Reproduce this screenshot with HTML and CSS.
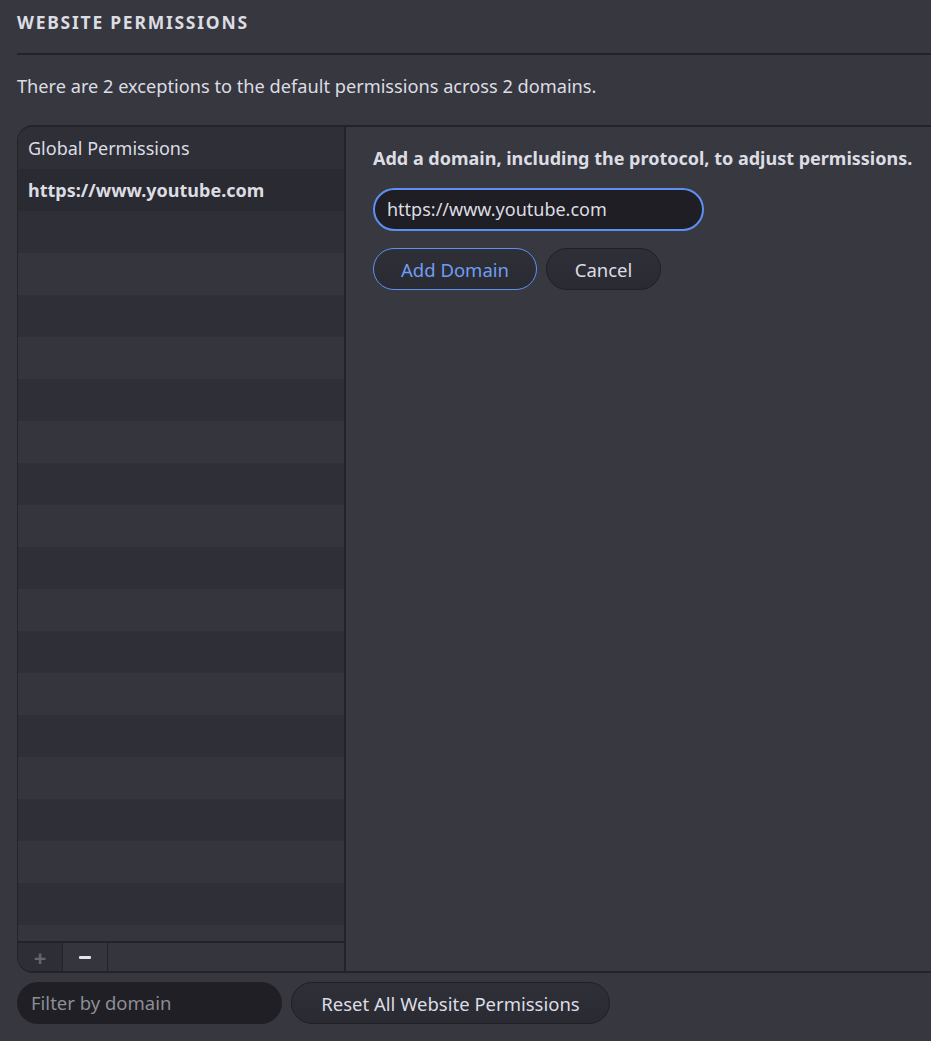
FILE: index.html
```html
<!DOCTYPE html>
<html>
<head>
<meta charset="utf-8">
<link rel="stylesheet" href="styles.css">
</head>
<body>
<div class="page">
  <h1 class="title">WEBSITE PERMISSIONS</h1>
  <div class="rule"></div>
  <p class="desc">There are 2 exceptions to the default permissions across 2 domains.</p>
  <div class="frame">
    <div class="list-col">
      <div class="list">
        <div class="row">Global Permissions</div>
        <div class="row sel">https://www.youtube.com</div>
        <div class="row"></div><div class="row"></div><div class="row"></div><div class="row"></div>
        <div class="row"></div><div class="row"></div><div class="row"></div><div class="row"></div>
        <div class="row"></div><div class="row"></div><div class="row"></div><div class="row"></div>
        <div class="row"></div><div class="row"></div><div class="row"></div><div class="row"></div>
        <div class="row"></div><div class="row"></div>
      </div>
      <div class="toolbar">
        <div class="tool plus">+</div>
        <div class="tool minus"><span class="dash"></span></div>
      </div>
    </div>
    <div class="pane">
      <div class="pane-head">Add a domain, including the protocol, to adjust permissions.</div>
      <div class="field">https://www.youtube.com</div>
      <div class="btns">
        <button class="btn primary">Add Domain</button>
        <button class="btn cancel">Cancel</button>
      </div>
    </div>
  </div>
  <div class="bottom">
    <div class="filter">Filter by domain</div>
    <button class="btn reset">Reset All Website Permissions</button>
  </div>
</div>
</body>
</html>
```
FILE: styles.css
```css
html, body {
  margin: 0;
  padding: 0;
  background: #373740;
  overflow: hidden;
}
body {
  font-family: "Noto Sans", "Open Sans", sans-serif;
  color: #dcdde3;
  font-size: 18px;
}
.page {
  padding-left: 17px;
  width: 960px;
}
.title {
  margin: 0;
  padding-top: 10px;
  height: 26px;
  font-size: 17.5px;
  font-weight: 700;
  letter-spacing: 1.75px;
  line-height: 24px;
  color: #dcdde3;
}
.rule {
  margin-top: 17px;
  height: 2px;
  background: #23232a;
}
.desc {
  margin: 0;
  padding-top: 19px;
  height: 51px;
  line-height: 24px;
  font-size: 18.2px;
}
.frame {
  display: flex;
  border-top: 2px solid #23232a;
  border-left: 1px solid #23232a;
  border-bottom: 2px solid #23232a;
  border-top-left-radius: 16px;
  border-bottom-left-radius: 16px;
  height: 844px;
  overflow: hidden;
}
.list-col {
  width: 326px;
  display: flex;
  flex-direction: column;
  background: #35353e;
  border-right: 2px solid #23232a;
}
.list {
  flex: 1;
  overflow: hidden;
}
.row {
  height: 42px;
  line-height: 42px;
  padding-left: 10px;
  background: #2f2f38;
  font-size: 18px;
}
.row:nth-child(even) {
  background: #35353e;
}
.row.sel {
  font-weight: 700;
  background: #2a2a32;
}
.toolbar {
  height: 28px;
  border-top: 2px solid #23232a;
  display: flex;
}
.tool {
  width: 44px;
  height: 28px;
  border-right: 1px solid #23232a;
  display: flex;
  align-items: center;
  justify-content: center;
}
.plus {
  background: #2e2e37;
  color: #64656e;
  font-size: 22px;
  font-weight: 700;
}
.dash {
  width: 12px;
  height: 3px;
  border-radius: 1px;
  background: #e4e5ea;
}
.pane {
  flex: 1;
  padding: 19px 27px;
  background: #383841;
}
.pane-head {
  font-weight: 700;
  font-size: 18px;
  line-height: 24px;
}
.field {
  margin-top: 18px;
  width: 315px;
  height: 39px;
  line-height: 39px;
  padding-left: 12px;
  border: 2px solid #5f8ff0;
  border-radius: 22px;
  background: #1e1e24;
  color: #dcdde3;
}
.btns {
  display: flex;
  gap: 9px;
  margin-top: 17px;
}
.btn {
  font-family: inherit;
  font-size: 18.5px;
  height: 42px;
  padding: 0 28px;
  border-radius: 21px;
  border: 1px solid #1f1f26;
  background: linear-gradient(#2f2f38, #2a2a32);
  color: #dcdde3;
}
.btn.primary {
  border-color: #5f8ff0;
  color: #6f9df2;
  width: 164px;
  padding: 0;
}
.btn.cancel {
  width: 115px;
  padding: 0;
}
.bottom {
  display: flex;
  gap: 9px;
  margin-top: 9px;
}
.filter {
  width: 251px;
  height: 42px;
  line-height: 42px;
  padding-left: 14px;
  border-radius: 21px;
  background: #1f1f25;
  color: #8d8e96;
  font-size: 18.5px;
}
.btn.reset {
  width: 319px;
  padding: 0;
}
```
